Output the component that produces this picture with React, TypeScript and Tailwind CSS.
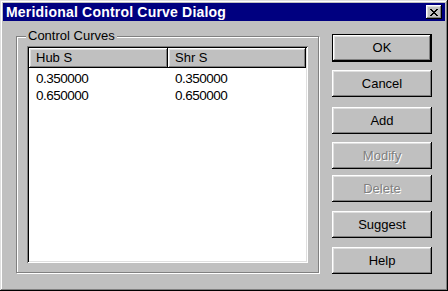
const raised =
	"shadow-[inset_-1px_-1px_#000,inset_1px_1px_#fff,inset_-2px_-2px_#808080,inset_2px_2px_#dfdfdf]";

type BtnProps = {
	label: string;
	top: string;
	isDefault?: boolean;
	disabled?: boolean;
};

const DlgButton = ({ label, top, isDefault, disabled }: BtnProps) => {
	if (isDefault) {
		return (
			<div className={`${top} w-[100px] h-[28px] border border-black`}>
				<div
					className={`w-full h-full flex items-center justify-center ${raised}`}
				>
					{label}
				</div>
			</div>
		);
	}
	return (
		<div
			className={`${top} w-[100px] h-[27px] flex items-center justify-center ${raised} ${
				disabled ? "text-[#808080] [text-shadow:1px_1px_0_#fff]" : ""
			}`}
		>
			{label}
		</div>
	);
};

const rows = [
	["0.350000", "0.350000"],
	["0.650000", "0.650000"],
];

export default function App() {
	return (
		<div className="w-[448px] h-[291px] bg-[#c0c0c0] p-[3px] flex flex-col text-[13px] text-black font-['Liberation_Sans',Arial,sans-serif] shadow-[inset_-1px_-1px_#000,inset_1px_1px_#dfdfdf,inset_-2px_-2px_#808080,inset_2px_2px_#fff] select-none">
			{/* title bar */}
			<div className="h-[18px] bg-[#000080] flex items-center justify-between pl-[3px] pr-[3px]">
				<span className="text-white font-bold text-[14px] tracking-[0.2px] leading-[18px]">
					Meridional Control Curve Dialog
				</span>
				<div
					className={`w-[16px] h-[14px] bg-[#c0c0c0] flex items-center justify-center ${raised}`}
				>
					<svg width="8" height="7" viewBox="0 0 8 7" shapeRendering="crispEdges">
						<path
							fill="#000"
							d="M0 0h2v1H0zM6 0h2v1H6zM1 1h2v1H1zM5 1h2v1H5zM2 2h4v1H2zM3 3h2v1H3zM2 4h4v1H2zM1 5h2v1H1zM5 5h2v1H5zM0 6h2v1H0zM6 6h2v1H6z"
						/>
					</svg>
				</div>
			</div>

			{/* body */}
			<div className="flex items-start pl-[13px]">
				<div className="relative mt-[15px] w-[303px] h-[237px] border border-[#808080] shadow-[inset_1px_1px_#fff,1px_1px_#fff]">
					<span className="absolute left-[9px] top-[-9px] px-[2px] leading-[16px] bg-[#c0c0c0]">
						Control Curves
					</span>
					<div className="ml-[10px] mt-[9px] w-[281px] h-[217px] bg-white p-[2px] shadow-[inset_1px_1px_#808080,inset_-1px_-1px_#fff,inset_2px_2px_#000,inset_-2px_-2px_#dfdfdf]">
						<div className="flex h-[20px] bg-[#c0c0c0]">
							<div className={`w-[139px] flex items-center pl-[7px] ${raised}`}>
								Hub S
							</div>
							<div className={`w-[138px] flex items-center pl-[7px] ${raised}`}>
								Shr S
							</div>
						</div>
						<div className="pt-[3px]">
							{rows.map(([hub, shr], i) => (
								<div key={i} className="flex h-[17px] items-center text-[13.5px] tracking-[-0.5px]">
									<span className="w-[139px] pl-[7px]">{hub}</span>
									<span className="w-[138px] pl-[7px]">{shr}</span>
								</div>
							))}
						</div>
					</div>
				</div>

				<div className="ml-[13px] flex flex-col">
					<DlgButton label="OK" top="mt-[13px]" isDefault />
					<DlgButton label="Cancel" top="mt-[8px]" />
					<DlgButton label="Add" top="mt-[10px]" />
					<DlgButton label="Modify" top="mt-[8px]" disabled />
					<DlgButton label="Delete" top="mt-[6px]" disabled />
					<DlgButton label="Suggest" top="mt-[9px]" />
					<DlgButton label="Help" top="mt-[9px]" />
				</div>
			</div>
		</div>
	);
}
